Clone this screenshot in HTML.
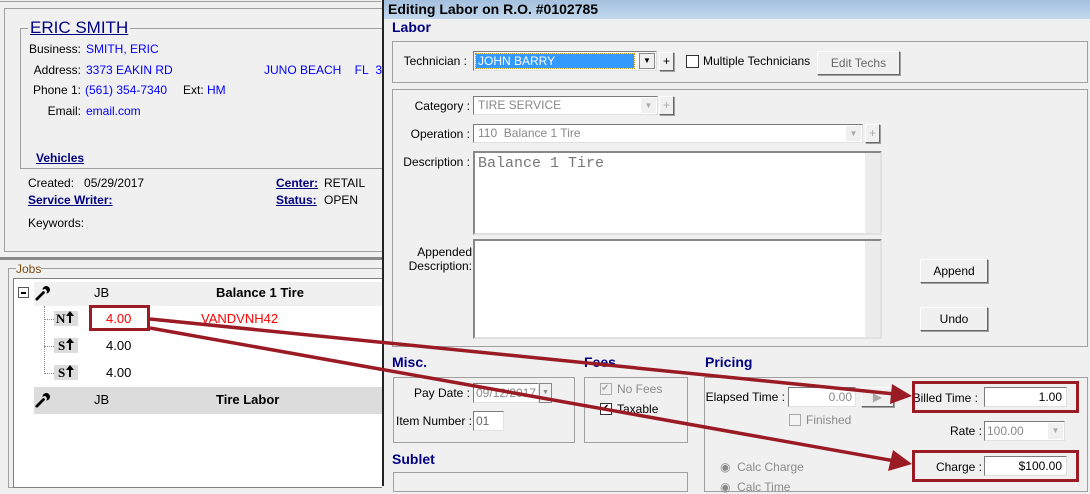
<!DOCTYPE html>
<html><head><meta charset="utf-8"><style>
*{box-sizing:border-box;margin:0;padding:0}
body{width:1090px;height:486px;overflow:hidden;background:#f0f0f0;font-family:"Liberation Sans",sans-serif;font-size:12px;color:#000;position:relative}
.a{position:absolute;white-space:nowrap}
.b{color:#0000ff}
.nv{color:#000080}
.u{text-decoration:underline;font-weight:bold;color:#000080}
.grp{position:absolute;border:1px solid #a0a0a0}
.inp{position:absolute;background:#fff;border:1px solid #7a7a7a;border-right-color:#e0e0e0;border-bottom-color:#e0e0e0}
.btn{position:absolute;background:#f0f0f0;border:1px solid #fff;border-right-color:#696969;border-bottom-color:#696969;text-align:center;box-shadow:1px 1px 0 #a0a0a0}
.h{position:absolute;font-weight:bold;font-size:14px;color:#000080}
.g{color:#8a8a8a}
.lbl{position:absolute;text-align:right;white-space:nowrap}
.red{position:absolute;border:3px solid #9b1b24}
.tag{position:absolute;width:24px;height:15px;background:#dcdcdc;font-weight:bold;font-family:'Liberation Serif',serif;font-size:13px;line-height:15px}
</style></head><body>
<svg width="0" height="0" style="position:absolute"><defs>
<symbol id="wr" viewBox="0 0 16 16"><path d="M2 14 L9 7" stroke="#000" stroke-width="3" stroke-linecap="round"/><path d="M8 4 a4 4 0 1 1 4 4 L13 6 L11 3 Z" fill="#000"/></symbol>
<symbol id="up" viewBox="0 0 8 12"><path d="M4 0 L8 5 L5 5 L5 12 L3 12 L3 5 L0 5 Z" fill="#000"/></symbol>
</defs></svg>
<!-- left panel -->
<div class="a" style="left:0;top:1px;width:381px;height:1px;background:#a0a0a0"></div>
<div class="a" style="left:4px;top:8px;width:378px;height:244px;border:1px solid #a0a0a0;border-right:none"></div>
<div class="grp" style="left:20px;top:28px;width:362px;height:141px;border-right:none"></div>
<div class="a nv" style="left:28px;top:18px;font-size:17px;text-decoration:underline;background:#f0f0f0;padding:0 2px">ERIC SMITH</div>
<div class="lbl" style="left:20px;width:61px;top:42px">Business:</div><div class="a b" style="left:86px;top:42px">SMITH, ERIC</div>
<div class="lbl" style="left:20px;width:61px;top:63px">Address:</div><div class="a b" style="left:86px;top:63px">3373 EAKIN RD</div>
<div class="a b" style="left:264px;top:63px">JUNO BEACH&nbsp;&nbsp;&nbsp; FL&nbsp;&nbsp;334</div>
<div class="lbl" style="left:20px;width:61px;top:83px">Phone 1:</div><div class="a b" style="left:85px;top:83px">(561) 354-7340</div>
<div class="a" style="left:183px;top:83px">Ext: <span class="b">HM</span></div>
<div class="lbl" style="left:20px;width:61px;top:104px">Email:</div><div class="a b" style="left:86px;top:104px">email.com</div>
<div class="a u" style="left:36px;top:151px">Vehicles</div>
<div class="a" style="left:28px;top:176px">Created:&nbsp;&nbsp; 05/29/2017</div>
<div class="a u" style="left:28px;top:193px">Service Writer:</div>
<div class="a" style="left:28px;top:216px">Keywords:</div>
<div class="a u" style="left:276px;top:176px">Center:</div><div class="a" style="left:324px;top:176px">RETAIL</div>
<div class="a u" style="left:276px;top:193px">Status:</div><div class="a" style="left:324px;top:193px">OPEN</div>
<div class="a" style="left:0;top:257px;width:382px;height:3px;background:#8a8a8a"></div>
<div class="grp" style="left:8px;top:268px;width:374px;height:220px;border-right:none"></div>
<div class="a" style="left:16px;top:262px;color:#7a4a10;background:#f0f0f0;font-size:12px">Jobs</div>
<div class="a" style="left:13px;top:278px;width:369px;height:210px;background:#fff;border:1px solid #808080;border-right:none"></div>
<div class="a" style="left:34px;top:282px;width:348px;height:24px;background:#f0f0f0"></div>
<div class="a" style="left:18px;top:287px;width:11px;height:11px;border:1px solid #555;background:#fff"><div style="margin:4px 2px 0;height:2px;background:#000"></div></div>
<svg class="a" style="left:35px;top:286px" width="15" height="15"><use href="#wr"/></svg>
<div class="a" style="left:94px;top:285px;font-size:13px">JB</div>
<div class="a" style="left:216px;top:285px;font-size:13px;font-weight:bold">Balance 1 Tire</div>
<div class="a" style="left:44px;top:306px;width:1px;height:66px;border-left:1px dotted #888"></div>
<div class="a" style="left:44px;top:319px;width:10px;border-top:1px dotted #888"></div>
<div class="a" style="left:44px;top:346px;width:10px;border-top:1px dotted #888"></div>
<div class="a" style="left:44px;top:373px;width:10px;border-top:1px dotted #888"></div>
<div class="tag" style="left:54px;top:311px;padding-left:2px">N<svg width="8" height="12" style="margin-left:1px"><use href="#up"/></svg></div>
<div class="tag" style="left:54px;top:338px;padding-left:4px">S<svg width="8" height="12" style="margin-left:1px"><use href="#up"/></svg></div>
<div class="tag" style="left:54px;top:365px;padding-left:4px">S<svg width="8" height="12" style="margin-left:1px"><use href="#up"/></svg></div>
<div class="a" style="left:106px;top:311px;color:#ff0000;font-size:13px">4.00</div>
<div class="a" style="left:201px;top:311px;color:#ff0000;font-size:13px">VANDVNH42</div>
<div class="a" style="left:106px;top:338px;font-size:13px">4.00</div>
<div class="a" style="left:106px;top:365px;font-size:13px">4.00</div>
<div class="a" style="left:34px;top:387px;width:348px;height:27px;background:#dcdcdc"></div>
<svg class="a" style="left:35px;top:393px" width="15" height="15"><use href="#wr"/></svg>
<div class="a" style="left:94px;top:392px;font-size:13px">JB</div>
<div class="a" style="left:216px;top:392px;font-size:13px;font-weight:bold">Tire Labor</div>
<div class="red" style="left:89px;top:305px;width:61px;height:26px"></div>

<!-- dialog -->
<div class="a" style="left:382px;top:0;width:708px;height:486px;background:#f0f0f0;border-left:2px solid #222"></div>
<div class="a" style="left:384px;top:0;width:706px;height:19px;background:linear-gradient(#a4c0de,#c2d8ee)"></div>
<div class="a" style="left:388px;top:1px;font-size:14px;font-weight:bold">Editing Labor on R.O. #0102785</div>
<div class="h" style="left:392px;top:19px">Labor</div>
<div class="grp" style="left:392px;top:41px;width:696px;height:42px"></div>
<div class="lbl" style="left:400px;width:67px;top:54px">Technician :</div>
<div class="inp" style="left:473px;top:51px;width:184px;height:20px"><div style="position:absolute;left:2px;top:2px;width:158px;height:14px;background:#3399ff;color:#fff;outline:1px dotted #c80;line-height:14px;padding-left:2px">JOHN BARRY</div><div style="position:absolute;right:1px;top:1px;width:16px;height:16px;background:#f0f0f0;border:1px solid #888;font-size:8px;text-align:center;line-height:14px">▼</div></div>
<div class="btn" style="left:659px;top:52px;width:15px;height:19px;line-height:16px">+</div>
<div class="a" style="left:686px;top:55px;width:13px;height:13px;border:1px solid #333;background:#fff"></div>
<div class="a" style="left:703px;top:54px">Multiple Technicians</div>
<div class="btn" style="left:817px;top:51px;width:83px;height:24px;line-height:22px;color:#666">Edit Techs</div>

<div class="grp" style="left:392px;top:89px;width:696px;height:258px"></div>
<div class="lbl" style="left:400px;width:70px;top:99px">Category :</div>
<div class="inp" style="left:473px;top:96px;width:185px;height:19px;padding:1px 4px;color:#888">TIRE SERVICE<div style="position:absolute;right:1px;top:1px;width:15px;height:15px;background:#f0f0f0;font-size:8px;color:#aaa;text-align:center;line-height:15px">▼</div></div>
<div class="btn" style="left:659px;top:96px;width:15px;height:19px;line-height:16px;color:#aaa">+</div>
<div class="lbl" style="left:400px;width:70px;top:127px">Operation :</div>
<div class="inp" style="left:473px;top:124px;width:390px;height:19px;padding:1px 4px;color:#888">110&nbsp; Balance 1 Tire<div style="position:absolute;right:1px;top:1px;width:15px;height:15px;background:#f0f0f0;font-size:8px;color:#aaa;text-align:center;line-height:15px">▼</div></div>
<div class="btn" style="left:865px;top:124px;width:15px;height:19px;line-height:16px;color:#aaa">+</div>
<div class="lbl" style="left:400px;width:70px;top:155px">Description :</div>
<div class="inp" style="left:473px;top:151px;width:409px;height:84px;border:2px solid #888;border-right-color:#e0e0e0;border-bottom-color:#e0e0e0;font-family:'Liberation Mono',monospace;font-size:15px;color:#777;padding:2px 3px">Balance 1 Tire<div style="position:absolute;right:0;top:0;width:15px;height:80px;background:#ececec"></div></div>
<div class="a" style="left:400px;top:245px;width:72px;text-align:right;line-height:14px">Appended<br>Description:</div>
<div class="inp" style="left:473px;top:239px;width:409px;height:100px;border:2px solid #888;border-right-color:#e0e0e0;border-bottom-color:#e0e0e0"><div style="position:absolute;right:0;top:0;width:15px;height:96px;background:#ececec"></div></div>
<div class="btn" style="left:920px;top:259px;width:68px;height:24px;line-height:22px">Append</div>
<div class="btn" style="left:920px;top:307px;width:68px;height:24px;line-height:22px">Undo</div>

<div class="h" style="left:392px;top:354px">Misc.</div>
<div class="grp" style="left:393px;top:377px;width:182px;height:66px"></div>
<div class="lbl" style="left:400px;width:70px;top:386px">Pay Date :</div>
<div class="inp" style="left:473px;top:383px;width:66px;height:20px;color:#888;padding:2px 2px;overflow:hidden">09/12/2017</div>
<div class="a" style="left:539px;top:383px;width:13px;height:20px;border:1px solid #888;background:#f0f0f0;font-size:7px;color:#888;text-align:center;line-height:18px">▼</div>
<div class="lbl" style="left:396px;width:74px;top:414px">Item Number :</div>
<div class="inp" style="left:473px;top:411px;width:31px;height:20px;padding:2px 2px;color:#666">01</div>
<div class="h" style="left:584px;top:354px">Fees</div>
<div class="grp" style="left:584px;top:377px;width:104px;height:66px"></div>
<div class="a" style="left:600px;top:383px;width:12px;height:12px;border:1px solid #aaa;color:#aaa;font-size:10px;line-height:10px">✔</div>
<div class="a g" style="left:617px;top:382px">No Fees</div>
<div class="a" style="left:600px;top:403px;width:12px;height:12px;border:1px solid #333;background:#fff;font-size:10px;line-height:10px">✔</div>
<div class="a" style="left:617px;top:402px">Taxable</div>
<div class="h" style="left:705px;top:354px">Pricing</div>
<div class="grp" style="left:704px;top:377px;width:384px;height:115px"></div>
<div class="lbl" style="left:705px;width:80px;top:390px">Elapsed Time :</div>
<div class="inp" style="left:788px;top:387px;width:68px;height:20px;text-align:right;padding:2px 3px;color:#888">0.00</div>
<div class="btn" style="left:861px;top:387px;width:33px;height:20px;color:#aaa;line-height:18px">▶</div>
<div class="a" style="left:789px;top:414px;width:12px;height:12px;border:1px solid #aaa;background:#f4f4f4"></div>
<div class="a g" style="left:806px;top:413px">Finished</div>
<div class="lbl" style="left:900px;width:82px;top:424px">Rate :</div>
<div class="inp" style="left:984px;top:421px;width:81px;height:20px;padding:2px 2px;color:#888">100.00<div style="position:absolute;right:1px;top:1px;width:15px;height:16px;background:#f0f0f0;font-size:8px;color:#aaa;text-align:center;line-height:16px">▼</div></div>
<div class="a g" style="left:720px;top:460px">◉&nbsp; Calc Charge</div>
<div class="a g" style="left:720px;top:480px">◉&nbsp; Calc Time</div>
<div class="lbl" style="left:912px;width:66px;top:391px">Billed Time :</div>
<div class="inp" style="left:984px;top:387px;width:83px;height:20px;text-align:right;padding:2px 4px">1.00</div>
<div class="lbl" style="left:912px;width:70px;top:460px">Charge :</div>
<div class="inp" style="left:984px;top:456px;width:83px;height:20px;text-align:right;padding:2px 4px">$100.00</div>
<div class="red" style="left:912px;top:381px;width:167px;height:32px"></div>
<div class="red" style="left:912px;top:450px;width:167px;height:32px"></div>
<div class="h" style="left:392px;top:451px">Sublet</div>
<div class="grp" style="left:393px;top:472px;width:295px;height:20px"></div>

<svg class="a" style="left:0;top:0" width="1090" height="486">
<g stroke="#9b1b24" stroke-width="3.5" fill="#9b1b24">
<line x1="150" y1="319" x2="895" y2="394"/>
<line x1="150" y1="328" x2="895" y2="461"/>
<polygon points="912,396 892,384 890,404" stroke="none"/>
<polygon points="912,464 893,450 888,471" stroke="none"/>
</g></svg>
</body></html>
